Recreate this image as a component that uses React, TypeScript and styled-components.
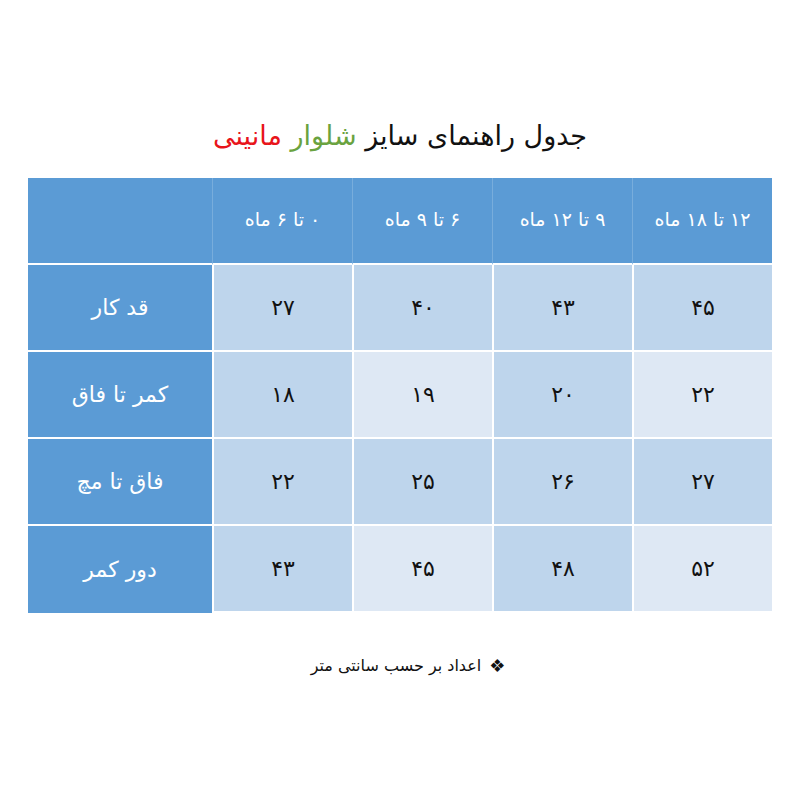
import React from "react";
import styled, { createGlobalStyle } from "styled-components";

const GlobalStyle = createGlobalStyle`
  body {
    margin: 0;
    background: #fff;
    font-family: "DejaVu Sans", "Noto Sans", sans-serif;
  }
`;

const headers = ["۰ تا ۶ ماه", "۶ تا ۹ ماه", "۹ تا ۱۲ ماه", "۱۲ تا ۱۸ ماه"];

const rows = [
  { label: "قد کار", values: ["۲۷", "۴۰", "۴۳", "۴۵"], banded: false },
  { label: "کمر تا فاق", values: ["۱۸", "۱۹", "۲۰", "۲۲"], banded: true },
  { label: "فاق تا مچ", values: ["۲۲", "۲۵", "۲۶", "۲۷"], banded: false },
  { label: "دور کمر", values: ["۴۳", "۴۵", "۴۸", "۵۲"], banded: true },
];

const App: React.FC = () => {
  return (
    <>
      <GlobalStyle />
      <Page>
        <Title dir="rtl">
          جدول راهنمای سایز <Green>شلوار</Green> <Red>مانینی</Red>
        </Title>
        <Table>
          <HeadCell $first />
          {headers.map((h) => (
            <HeadCell key={h} dir="rtl">
              {h}
            </HeadCell>
          ))}
          {rows.map((row) => (
            <React.Fragment key={row.label}>
              <LabelCell dir="rtl">{row.label}</LabelCell>
              {row.values.map((v, i) => (
                <ValueCell key={i} $light={row.banded && i % 2 === 1}>
                  {v}
                </ValueCell>
              ))}
            </React.Fragment>
          ))}
        </Table>
        <Note dir="rtl">
          <Bullet>❖</Bullet> اعداد بر حسب سانتی متر
        </Note>
      </Page>
    </>
  );
};

export default App;

const Page = styled.div`
  width: 800px;
  height: 800px;
  display: flex;
  flex-direction: column;
  align-items: center;
  padding-top: 116px;
  box-sizing: border-box;
`;

const Title = styled.h1`
  margin: 0 0 22px;
  font-size: 27px;
  font-weight: normal;
  line-height: 40px;
  color: #111;
`;

const Green = styled.span`
  color: #6aa33f;
`;

const Red = styled.span`
  color: #e8141b;
`;

const Table = styled.div`
  display: grid;
  grid-template-columns: 184px repeat(4, 140px);
  grid-auto-rows: 87px;
  width: 744px;
`;

const HeadCell = styled.div<{ $first?: boolean }>`
  background: #5b9bd5;
  color: #fff;
  font-size: 19px;
  padding-bottom: 3px;
  display: flex;
  align-items: center;
  justify-content: center;
  border-left: ${({ $first }) =>
    $first ? "none" : "1px solid rgba(255, 255, 255, 0.18)"};
  border-bottom: 2px solid #fff;
`;

const LabelCell = styled.div`
  background: #5b9bd5;
  color: #fff;
  font-size: 22px;
  display: flex;
  align-items: center;
  justify-content: center;
  border-bottom: 2px solid #fff;
  &:nth-last-child(5) {
    border-bottom: none;
  }
`;

const ValueCell = styled.div<{ $light: boolean }>`
  background: ${({ $light }) => ($light ? "#dee8f4" : "#bed5ec")};
  color: #111;
  font-size: 22px;
  display: flex;
  align-items: center;
  justify-content: center;
  border-left: 2px solid #fff;
  border-bottom: 2px solid #fff;
`;

const Note = styled.div`
  margin-top: 42px;
  margin-left: 16px;
  font-size: 16px;
  color: #111;
  display: flex;
  align-items: center;
  gap: 8px;
`;

const Bullet = styled.span`
  font-size: 18px;
  font-weight: bold;
`;
